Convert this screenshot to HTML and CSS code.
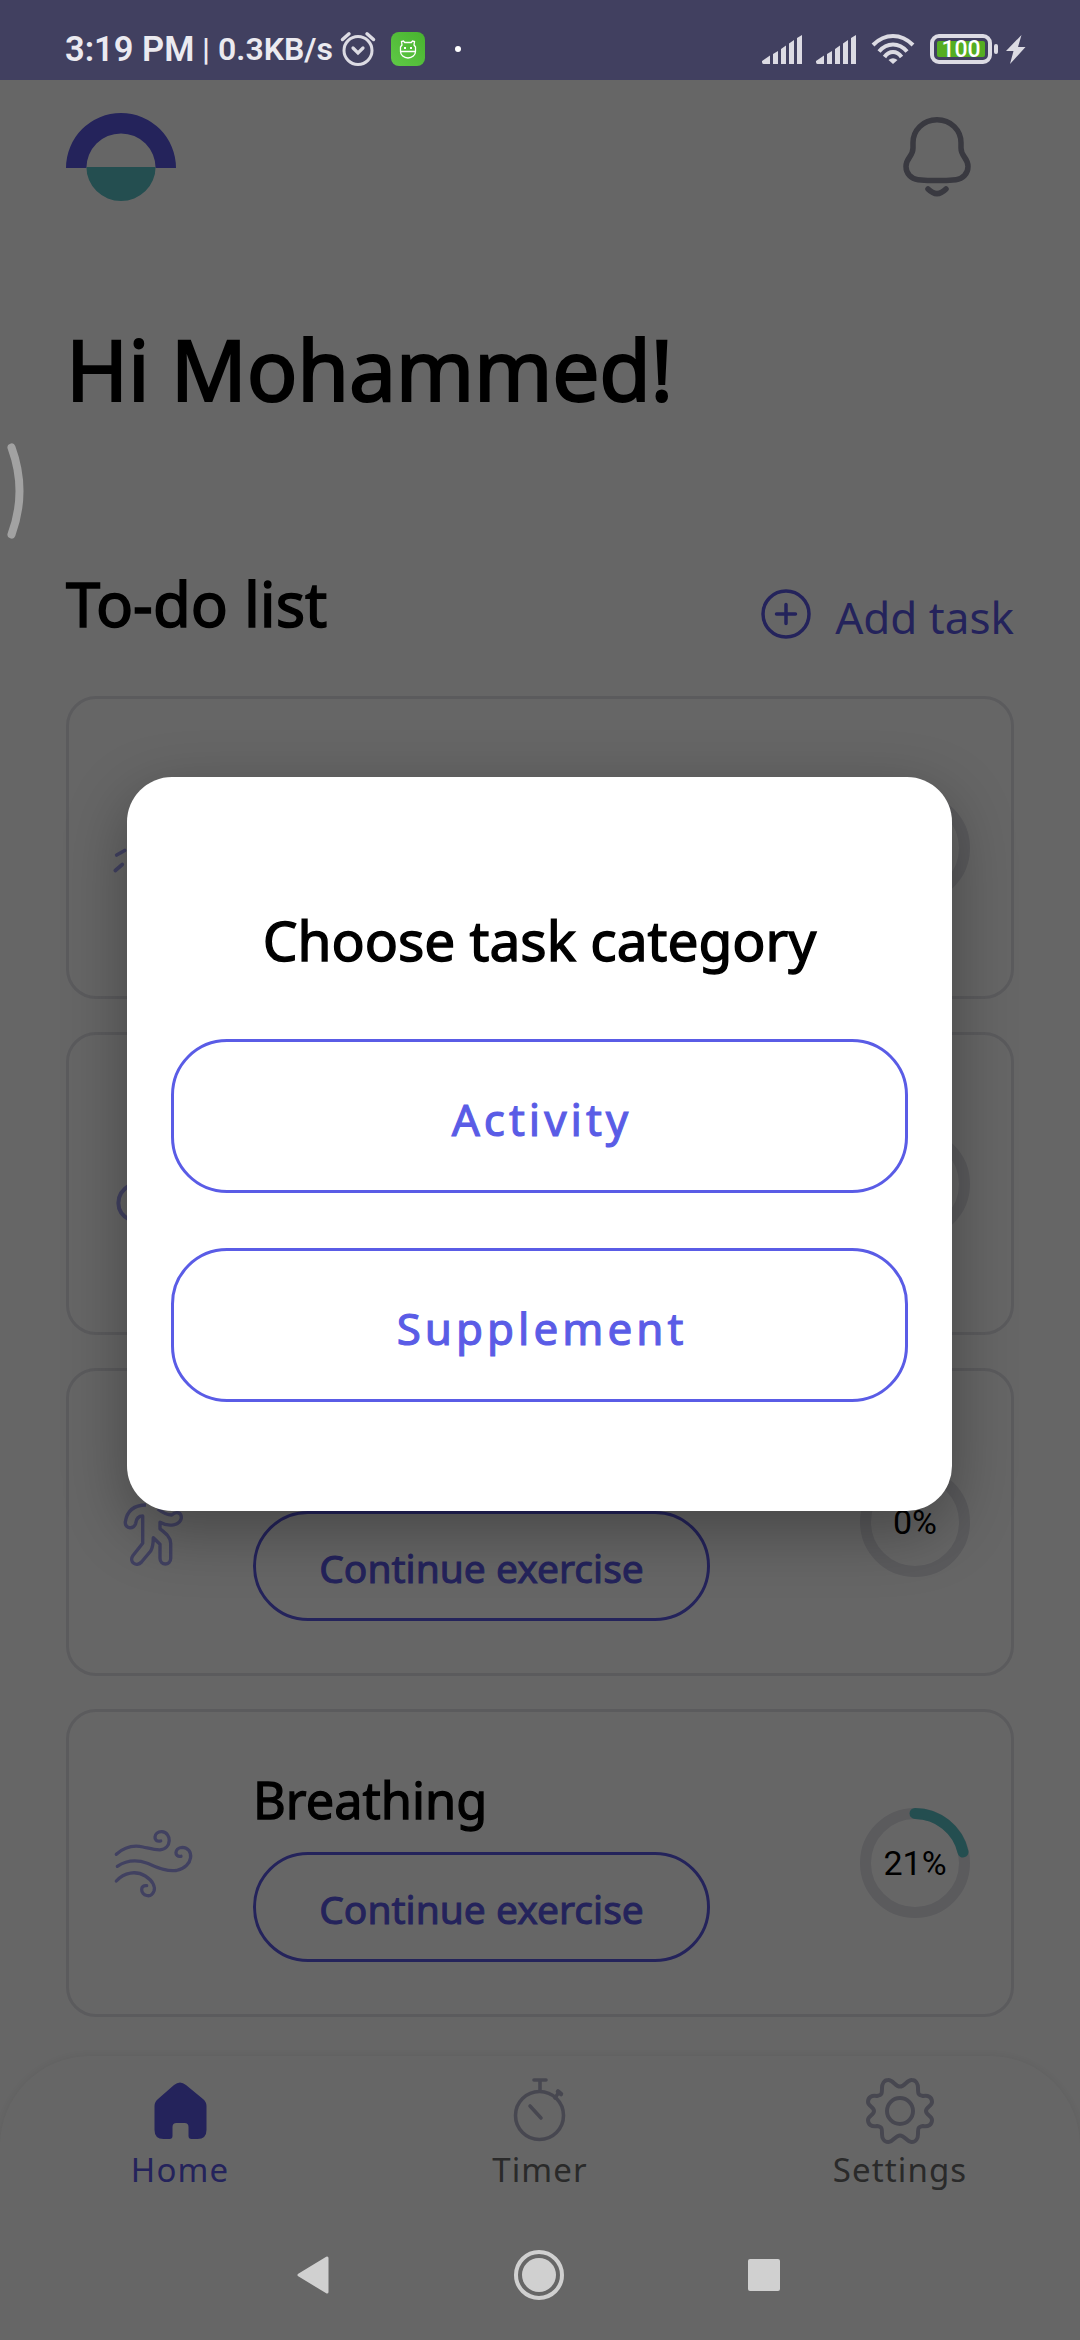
FILE: index.html
```html
<!DOCTYPE html>
<html lang="en">
<head>
<meta charset="utf-8">
<title>Home</title>
<link rel="stylesheet" href="styles.css">
</head>
<body>
<div class="screen">
  <header class="status">
    <span class="status-time">3:19 PM</span>
    <span class="status-sep">|</span>
    <span class="status-rate">0.3KB/s</span>
    <svg class="alarm" width="36" height="36" viewBox="0 0 36 36"><g fill="none" stroke="#dcdbe3" stroke-linecap="round"><circle cx="18" cy="19.500" r="14" stroke-width="3"/><path d="M2.500 8.500 9 2.800M33.500 8.500 27 2.800" stroke-width="3.500"/><path d="m13 17 5 5 5-5" stroke-width="3.200"/></g></svg>
    <svg class="bot" width="34" height="34" viewBox="0 0 34 34"><defs><linearGradient id="g" x1="0" y1="1" x2="1" y2="0"><stop offset="0" stop-color="#5fc946"/><stop offset="1" stop-color="#48b32f"/></linearGradient></defs><rect width="34" height="34" rx="8" fill="url(#g)"/><path d="M9.500 19.500V15l1.500-2-.5-3.500 2-.5 1.200 1.500h6.600L21.500 9l2 .5L23 13l1.500 2v4.500a7.500 6.500 0 0 1-15 0ZM9.500 19.500h15" fill="none" stroke="#fff" stroke-width="1.300"/><path d="M13 16h2M19 16h2" stroke="#fff" stroke-width="2"/></svg>
    <span class="dot"></span>
    <span class="grow"></span>
    <svg class="signal" width="40" height="29" viewBox="0 0 40 29"><path d="M0 27v-1l8-5.500V29H1.500Q0 29 0 27ZM11 19l5-3v13h-5ZM19 14l5-3.500V29h-5ZM27 8.500 32 5v24h-5ZM35 3l5-3v29h-5Z" fill="#dcdbe3"/></svg>
    <svg class="signal second" width="40" height="29" viewBox="0 0 40 29"><path d="M0 27v-1l8-5.500V29H1.500Q0 29 0 27ZM11 19l5-3v13h-5ZM19 14l5-3.500V29h-5ZM27 8.500 32 5v24h-5ZM35 3l5-3v29h-5Z" fill="#dcdbe3"/></svg>
    <svg class="wifi" width="44" height="30" viewBox="0 0 44 30"><g fill="none" stroke="#dcdbe3" stroke-width="4"><path d="M2 11Q11 2 22 2t20 9"/><path d="M8 17.500Q14 10.500 22 10.500t14 7"/><path d="M13.500 23q3.500-5 8.500-5t8.500 5"/></g><path d="M17.500 26q4.500-3.500 9 0L22 30Z" fill="#dcdbe3"/></svg>
    <span class="battery"><span class="charge">100</span></span>
    <span class="nub"></span>
    <svg class="bolt" width="20" height="29" viewBox="0 0 20 29"><path d="M15.500 0 0 16h7.500L4 29l15.500-17H12Z" fill="#dcdbe3"/></svg>
  </header>

  <main class="app">
    <div class="topbar">
      <svg width="110" height="88" viewBox="0 0 110 88"><path d="M0 55a55 55 0 0 1 110 0H89.600a34.600 34.600 0 0 0-69.200 0Z" fill="#5a58e4"/><path d="M20.400 54h69.200a34.600 34 0 0 1-69.200 0Z" fill="#5ac3c8"/></svg>
      <svg class="bell" width="72" height="84" viewBox="0 0 72 84"><g fill="none" stroke="#8e8ea0" stroke-width="5.500" stroke-linecap="round" stroke-linejoin="round"><path d="M36 6.800c-14 0-24 10.500-24 23V35c0 9-7 9.500-7 18.500 0 7 5 12.500 12 13.200q19 1.800 38 0c7-.7 12-6.200 12-13.200 0-9-7-9.500-7-18.500v-5.200c0-12.500-10-23-24-23Z"/><path d="M27 76q9 9 18 0"/></g></svg>
    </div>
    <h1 class="greeting">Hi Mohammed!</h1>
    <div class="list-head">
      <h2 class="list-title">To-do list</h2>
      <div class="add">
        <svg width="50" height="50" viewBox="0 0 50 50"><g fill="none" stroke="#5a58e4" stroke-width="3.500" stroke-linecap="round"><circle cx="25" cy="25" r="23"/><path d="M25 15.500v19M15.500 25h19"/></g></svg>
        <span>Add task</span>
      </div>
    </div>
    <section class="cards">
      <article class="card short">
        <svg class="task-icon" width="84" height="84" viewBox="0 0 84 84"><path d="m6.700 49 8-4.500M5.300 64.500l7-6" fill="none" stroke="#a2a2f2" stroke-width="3.700" stroke-linecap="round"/></svg>
        <div class="card-body"></div>
        <svg class="ring" width="110" height="110" viewBox="0 0 110 110"><circle cx="55" cy="55" r="49.500" class="track"/></svg>
      </article>
      <article class="card short">
        <svg class="task-icon" width="84" height="84" viewBox="0 0 84 84"><path d="M20 43C4.500 52 4.500 70 20 78" fill="none" stroke="#a2a2f2" stroke-width="4" stroke-linecap="round"/></svg>
        <div class="card-body"></div>
        <svg class="ring" width="110" height="110" viewBox="0 0 110 110"><circle cx="55" cy="55" r="49.500" class="track"/></svg>
      </article>
      <article class="card">
        <svg class="task-icon" width="84" height="84" viewBox="0 0 84 84"><path d="M36 25C24 25 17 31 15.300 42c-.5 7.500 9 7.500 10.400 1.300.5-4 2.500-7.300 7-7.300v27.300L23 75.500c-4.500 6.500 3.500 12 8.500 6.500l9.200-11c2-3.500 2.600-7.500 2.600-13.300L50 64.300v14c0 7.600 10.700 7.600 10.700 0v-15C60.500 57 56 53.500 50 48.800v-6.500c9 5 20 3 21.300-4 .5-6-5-7.300-9.600-3.300-5 0-10-3-14-6" fill="none" stroke="#a2a2f2" stroke-width="3.400" stroke-linejoin="round"/></svg>
        <div class="card-body"><span class="pill">Continue exercise</span></div>
        <svg class="ring" width="110" height="110" viewBox="0 0 110 110"><circle cx="55" cy="55" r="49.500" class="track"/><text x="55" y="67" class="pct">0%</text></svg>
      </article>
      <article class="card">
        <svg class="task-icon" width="84" height="84" viewBox="0 0 84 84"><g fill="none" stroke="#a2a2f2" stroke-width="3.300" stroke-linecap="round"><path d="M6.300 33.300C15 25.500 24 24 33 26c7 1.500 12 3 17 2.800 12-1 12-17.500 1.700-18.100-8-.2-9.500 10.800-1 9.300"/><path d="M7.300 45.300c10-6.500 19-7 30-3 9 3.500 18 8.500 29 7.200 18-3.500 18-23 6-23.200-8.500.5-8 10.500-1.300 9"/><path d="M6.300 60c8-9 20-10.500 29-5 8 5 10 11 8.700 15-3 8-12.500 4.500-12.300-1.500 0-3 2-4.200 5-3.800"/></g></svg>
        <div class="card-body"><h3 class="card-title">Breathing</h3><span class="pill">Continue exercise</span></div>
        <svg class="ring" width="110" height="110" viewBox="0 0 110 110"><circle cx="55" cy="55" r="49.500" class="track"/><path d="M55 5.500A49.500 49.500 0 0 1 103 44" class="progress"/><text x="55" y="67" class="pct">21%</text></svg>
      </article>
    </section>
  </main>

  <nav class="tabs">
    <div class="tab active">
      <svg width="68" height="70" viewBox="0 0 68 70"><path d="M28 11q6-5 12 0l17 14q3.500 3 3.500 7v24q0 9-9 9h-6q-3 0-3-3V53q0-4-4-4h-8q-4 0-4 4v9q0 3-3 3h-6q-9 0-9-9V32q0-4 3.500-7Z" fill="#5a58e4"/></svg>
      <span>Home</span>
    </div>
    <div class="tab">
      <svg width="68" height="70" viewBox="0 0 68 70"><g fill="none" stroke="#b2b2c8" stroke-width="3.600" stroke-linecap="round" stroke-linejoin="round"><circle cx="33.500" cy="41.500" r="24"/><path d="M28 6h12M34 6v11M49 24l4-6M24 32l11 12"/><path d="m52 17.500 3 2.500" stroke-width="4.500"/></g></svg>
      <span>Timer</span>
    </div>
    <div class="tab">
      <svg width="68" height="70" viewBox="0 0 68 70"><g fill="none" stroke="#b2b2c8" stroke-width="4"><circle cx="34" cy="37" r="13"/><path d="M34 12.500c5 0 7-7 12-6.500 4 0 6 4 6 8 0 6 0 7 5 8 5-1 9 1 9 6 0 4-6 5-6 9s6 5 6 9c0 5-4 7-9 6-5 1-5 2-5 8 0 4-2 8-6 8-5 .500-7-6.500-12-6.500s-7 7-12 6.500c-4 0-6-4-6-8 0-6 0-7-5-8-5 1-9-1-9-6 0-4 6-5 6-9s-6-5-6-9c0-5 4-7 9-6 5-1 5-2 5-8 0-4 2-8 6-8 5-.500 7 6.500 12 6.500Z"/></g></svg>
      <span>Settings</span>
    </div>
  </nav>

  <div class="scrim">
    <div class="dialog">
      <h2 class="dialog-title">Choose task category</h2>
      <button class="choice">Activity</button>
      <button class="choice">Supplement</button>
    </div>
  </div>

  <svg class="edge" width="20" height="96" viewBox="0 0 20 96"><path d="M4.500 4.500q16 43.500 0 87" fill="none" stroke="#a2a2a2" stroke-width="8" stroke-linecap="round"/></svg>

  <footer class="sysnav">
    <svg width="34" height="40" viewBox="0 0 34 40"><path d="M3 20 31 3v34Z" fill="#d0d0d0" stroke="#d0d0d0" stroke-width="3" stroke-linejoin="round"/></svg>
    <svg width="52" height="52" viewBox="0 0 52 52"><circle cx="26" cy="26" r="23" fill="none" stroke="#d0d0d0" stroke-width="4"/><circle cx="26" cy="26" r="17" fill="#d0d0d0"/></svg>
    <svg width="34" height="34" viewBox="0 0 34 34"><rect x="1" y="1" width="32" height="32" rx="2" fill="#d0d0d0"/></svg>
  </footer>
</div>
</body>
</html>
```

FILE: styles.css
```css
* { box-sizing: border-box; }
body { margin: 0; }
h1, h2, h3 { margin: 0; font-weight: 400; }
svg { display: block; flex: none; }

.screen {
  position: relative;
  display: flex;
  flex-direction: column;
  width: 1080px;
  height: 2340px;
  overflow: hidden;
  background: #fff;
  color: #000;
  font-family: "Noto Sans", sans-serif;
}

/* headings and buttons use the regular face with thickened strokes */
.greeting, .list-title, .card-title, .dialog-title, .pill, .choice { -webkit-text-stroke: .025em currentColor; }

/* status bar sits above the scrim */
.status {
  position: relative;
  z-index: 2;
  flex: none;
  display: flex;
  align-items: center;
  height: 80px;
  padding: 18px 54px 0 65px;
  background: #414060;
  color: #ebeaf0;
  font-family: Roboto, sans-serif;
  font-weight: 600;
  white-space: nowrap;
}
.status-time { width: 137px; font-size: 34.500px; }
.status-sep { width: 16px; font-size: 32px; font-weight: 500; }
.status-rate { width: 122px; font-size: 32px; }
.bot { margin-left: 15px; }
.dot { width: 6px; height: 6px; margin-left: 30px; border-radius: 3px; background: #fff; }
.grow { flex: 1; }
.second { margin-left: 14px; }
.wifi { margin-left: 15px; }
.battery {
  width: 62px;
  height: 30px;
  margin-left: 15px;
  padding: 3px;
  border: 4px solid #dcdbe3;
  border-radius: 9px;
}
.charge {
  display: block;
  height: 16px;
  border-radius: 2px;
  background: #55ad22;
  color: #fff;
  font-size: 23px;
  font-weight: 500;
  line-height: 17px;
  text-align: center;
}
.nub { width: 4px; height: 10px; margin-left: 2px; border-radius: 2px; background: #dcdbe3; }
.bolt { margin-left: 8px; }

.app { flex: none; padding: 0 66px; }
.topbar { display: flex; justify-content: space-between; padding: 33px 41px 0 0; }
.greeting { margin-top: 108px; font-size: 84px; line-height: 120px; letter-spacing: -.3px; white-space: nowrap; }
.list-head { display: flex; justify-content: space-between; margin-top: 129px; height: 138px; }
.list-title { padding-top: 3px; font-size: 61.500px; line-height: 84px; }
.add { display: flex; gap: 24px; padding-top: 31px; color: #5a58e4; font-size: 44px; line-height: 57px; }

.cards { display: flex; flex-direction: column; gap: 33px; }
.card {
  display: flex;
  align-items: center;
  height: 308px;
  padding: 0 41px;
  border: 3px solid #e3e3e9;
  border-radius: 30px;
}
.card.short { height: 303px; }
.task-icon { overflow: visible; }
.card-body {
  flex: 1;
  align-self: stretch;
  display: flex;
  flex-direction: column;
  align-items: flex-start;
  justify-content: flex-end;
  padding: 0 0 52px 59px;
}
.card-title { margin-bottom: 17px; font-size: 50.500px; line-height: 70px; }
.pill {
  width: 457px;
  height: 110px;
  border: 3px solid #5a58e4;
  border-radius: 55px;
  color: #5a58e4;
  font-size: 39px;
  line-height: 108px;
  text-align: center;
}
.track { fill: none; stroke: #e3e3e9; stroke-width: 11; }
.progress { fill: none; stroke: #5ac3c8; stroke-width: 11; stroke-linecap: round; }
.pct { font: 34px Roboto, sans-serif; text-anchor: middle; }

.tabs {
  display: grid;
  grid-template-columns: repeat(3, 1fr);
  flex: 1;
  margin-top: 39px;
  padding-top: 18px;
  border-radius: 90px 90px 0 0;
  background: #fff;
  box-shadow: 0 0 10px rgba(0, 0, 0, .08);
}
.tab {
  display: flex;
  flex-direction: column;
  align-items: center;
  gap: 3px;
  color: #696969;
  font-size: 33px;
  line-height: 46px;
  letter-spacing: 1.1px;
}
.tab.active { color: #5a58e4; }

.scrim {
  position: absolute;
  inset: 0;
  z-index: 1;
  padding: 777px 128px 0 127px;
  background: rgba(0, 0, 0, .6);
}
.dialog {
  display: flex;
  flex-direction: column;
  align-items: center;
  height: 734px;
  padding: 125px 44px 0;
  border-radius: 45px;
  background: #fff;
  box-shadow: 0 20px 64px rgba(0, 0, 0, .32);
}
.dialog-title { height: 137px; font-size: 55px; line-height: 76px; white-space: nowrap; }
.choice {
  width: 100%;
  height: 154px;
  margin-bottom: 55px;
  padding: 6px 0 0 5px;
  border: 3px solid #5a5ce6;
  border-radius: 56px;
  background: none;
  color: #5a5ce6;
  font: 400 44px "Noto Sans", sans-serif;
  letter-spacing: 4px;
}

.edge { position: absolute; z-index: 2; left: 7px; top: 443px; }

/* system buttons over the bottom of the app */
.sysnav {
  position: absolute;
  z-index: 2;
  left: 0;
  right: 0;
  bottom: 0;
  display: flex;
  align-items: center;
  justify-content: space-between;
  height: 130px;
  padding: 0 299px 0 296px;
}
```
